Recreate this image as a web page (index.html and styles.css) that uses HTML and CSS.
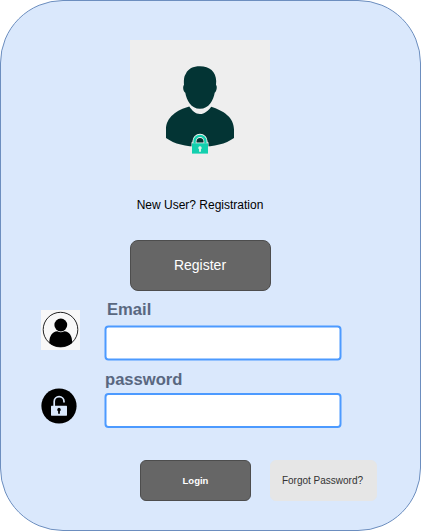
FILE: index.html
```html
<!DOCTYPE html>
<html lang="en">
<head>
<meta charset="utf-8">
<title>Login</title>
<link rel="stylesheet" href="styles.css">
</head>
<body>
<main class="card">
  <svg class="hero" viewBox="0 0 140 140" aria-hidden="true">
    <rect width="140" height="140" fill="#eeeeee"/>
    <path fill="#033434" d="M70 26.200c9.500 0 16 5.300 16.200 14.800 0 1.500-.2 2.800-.2 4 1.300.8 1 6.300-1.300 7.700C83.500 60 79 68.800 70 68.800S56.500 60 55.300 52.700C53 51.300 52.600 46 54 45c0-3-.7-8 2-11.500 2-4.800 7-7.300 14-7.300Z"/>
    <path fill="#033434" d="M59.300 66.500C62 70.500 65.500 74 70 74s8.500-3.500 11.200-7.300C93 70.500 104 77 104 89.500V98c-8.500 6-19.500 8.700-34 8.700S44.500 104 36 98v-8.500C36 77 47 70 59.300 66.500Z"/>
    <path fill="#eeeeee" d="M61.500 114.300V102.300h.9v-1a7.600 7.600 0 0 1 15.200 0v1h.9v12Z"/>
    <path fill="#033434" d="M66.500 102.500v-1a3.500 3.500 0 0 1 7 0v1Z"/>
    <path fill="none" stroke="#13cfae" stroke-width="2.300" d="M64.600 103.500v-2.300a5.400 5.400 0 0 1 10.800 0v2.300"/>
    <rect x="62" y="103.300" width="16" height="10.300" fill="#13cfae"/>
    <path fill="#d8f3e8" d="M70 106.200a1.700 1.700 0 0 1 1 3.100v2.400h-2v-2.400a1.700 1.700 0 0 1 1-3.100Z"/>
  </svg>
  <p class="intro">New User? Registration</p>
  <button class="btn register">Register</button>
  <form class="fields">
    <svg class="icon-user" viewBox="0 0 39 40" aria-hidden="true">
      <rect width="39" height="40" fill="#f8f8f8"/>
      <circle cx="19.500" cy="19.600" r="17.300" fill="none" stroke="#222" stroke-width="1"/>
      <circle cx="19.800" cy="15" r="6.400"/>
      <path d="M8.300 33C8.300 25.500 11.500 21.600 16.300 21.200Q19.800 23.200 23.300 21.200C28.500 21.600 31.200 25.500 31.200 33Q26 36.900 19.500 36.900T8.300 33Z"/>
    </svg>
    <div class="field email">
      <label for="email">Email</label>
      <input id="email" type="text">
    </div>
    <svg class="icon-lock" viewBox="0 0 36 36" aria-hidden="true">
      <circle cx="18" cy="18" r="17.600"/>
      <path fill="none" stroke="#dae8fc" stroke-width="1.700" d="M13.200 18.500v-5a4.900 4.900 0 0 1 9.800 0v1"/>
      <rect x="10" y="17.700" width="16" height="10" rx=".6" fill="#dae8fc"/>
      <path d="M18 19.800a1.900 1.900 0 0 1 .9 3.500v2.500h-1.800v-2.500a1.900 1.900 0 0 1 .9-3.500Z"/>
    </svg>
    <div class="field password">
      <label for="password">password</label>
      <input id="password" type="password">
    </div>
  </form>
  <div class="actions">
    <button class="btn login">Login</button>
    <button class="btn forgot">Forgot Password?</button>
  </div>
</main>
</body>
</html>
```
FILE: styles.css
```css
* {
  box-sizing: border-box;
}

body {
  margin: 0;
  background: #fff;
  font-family: "Liberation Sans", Arial, sans-serif;
}

.card {
  width: 421px;
  height: 531px;
  padding-top: 39px;
  background: #dae8fc;
  border: 1px solid #6c8ebf;
  border-radius: 63px;
}

.hero {
  display: block;
  width: 140px;
  height: 140px;
  margin-left: 129px;
}

.intro {
  width: 140px;
  margin: 18px 0 0 129px;
  font-size: 12px;
  line-height: 14px;
  text-align: center;
  white-space: nowrap;
  color: #000;
}

.btn {
  display: block;
  padding: 0;
  border: 1px solid #4d4d4d;
  border-radius: 8px;
  background: #666;
  color: #fff;
  font-family: inherit;
  white-space: nowrap;
}

.register {
  width: 141px;
  height: 51px;
  margin: 28px 0 0 129px;
  padding: 0 1px 2px 0;
  font-size: 14px;
}

.fields {
  display: grid;
  grid-template-columns: 64px 237px;
  grid-template-rows: 69px 68px;
  margin-left: 40px;
}

.icon-user {
  width: 39px;
  height: 40px;
  margin-top: 19px;
}

.icon-lock {
  width: 36px;
  height: 36px;
  margin-top: 28px;
}

.field {
  display: flex;
  flex-direction: column;
}

.field label {
  height: 20px;
  font-size: 16.6px;
  font-weight: bold;
  line-height: 20px;
  color: #596780;
}

.email label {
  margin: 9px 0 5px 2px;
}

.password label {
  margin: 10px 0 3px;
}

.field input {
  width: 237px;
  height: 35px;
  padding: 0 8px;
  border: 2px solid #4c9aff;
  border-radius: 4px;
  background: #fff;
  font-size: 14px;
  outline: none;
  transform: translateX(-0.5px);
}

.email input {
  transform: translate(-0.5px, 0.5px);
}

.actions {
  display: flex;
  gap: 19px;
  margin: 32px 0 0 139px;
}

.login {
  width: 111px;
  height: 41px;
  border-radius: 6px;
  font-size: 9.5px;
  font-weight: bold;
}

.forgot {
  width: 107px;
  height: 41px;
  padding-right: 2px;
  border-color: #e6e6e6;
  border-radius: 6px;
  background: #e6e6e6;
  color: #333;
  font-size: 10px;
}
```
